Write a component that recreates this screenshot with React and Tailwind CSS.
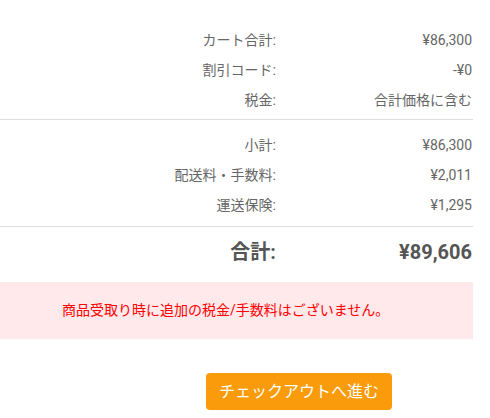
const font = { fontFamily: 'Roboto, "Noto Sans CJK JP", sans-serif' };

function Row({ label, value }) {
  return (
    <div className="grid grid-cols-[276px_1fr] h-[30px] items-center text-[14px] text-[#666]">
      <div className="text-right">{label}</div>
      <div className="text-right pr-[1px]">{value}</div>
    </div>
  );
}

export default function App() {
  return (
    <div className="w-[490px] h-[418px] bg-white" style={font}>
      <div className="w-[473px] pt-[25px]">
        <div className="pb-[4px] border-b border-[#ddd]">
          <Row label="カート合計:" value="¥86,300" />
          <Row label="割引コード:" value="-¥0" />
          <Row label="税金:" value="合計価格に含む" />
        </div>
        <div className="pt-[10px] pb-[6px] border-b border-[#ddd]">
          <Row label="小計:" value="¥86,300" />
          <Row label="配送料・手数料:" value="¥2,011" />
          <Row label="運送保険:" value="¥1,295" />
        </div>
        <div className="grid grid-cols-[276px_1fr] h-[50px] items-center text-[20px] font-bold text-[#555]">
          <div className="text-right">合計:</div>
          <div className="text-right pr-[1px]">¥89,606</div>
        </div>
        <div className="mt-[5px] h-[57px] bg-[#ffe9ea] flex items-center pl-[62px] text-[14px] text-[#f00]">
          商品受取り時に追加の税金/手数料はございません。
        </div>
        <div className="mt-[34px] ml-[206px]">
          <button className="w-[186px] h-[37px] rounded-[4px] bg-[#f99b0a] text-white text-[16px]">
            チェックアウトへ進む
          </button>
        </div>
      </div>
    </div>
  );
}
